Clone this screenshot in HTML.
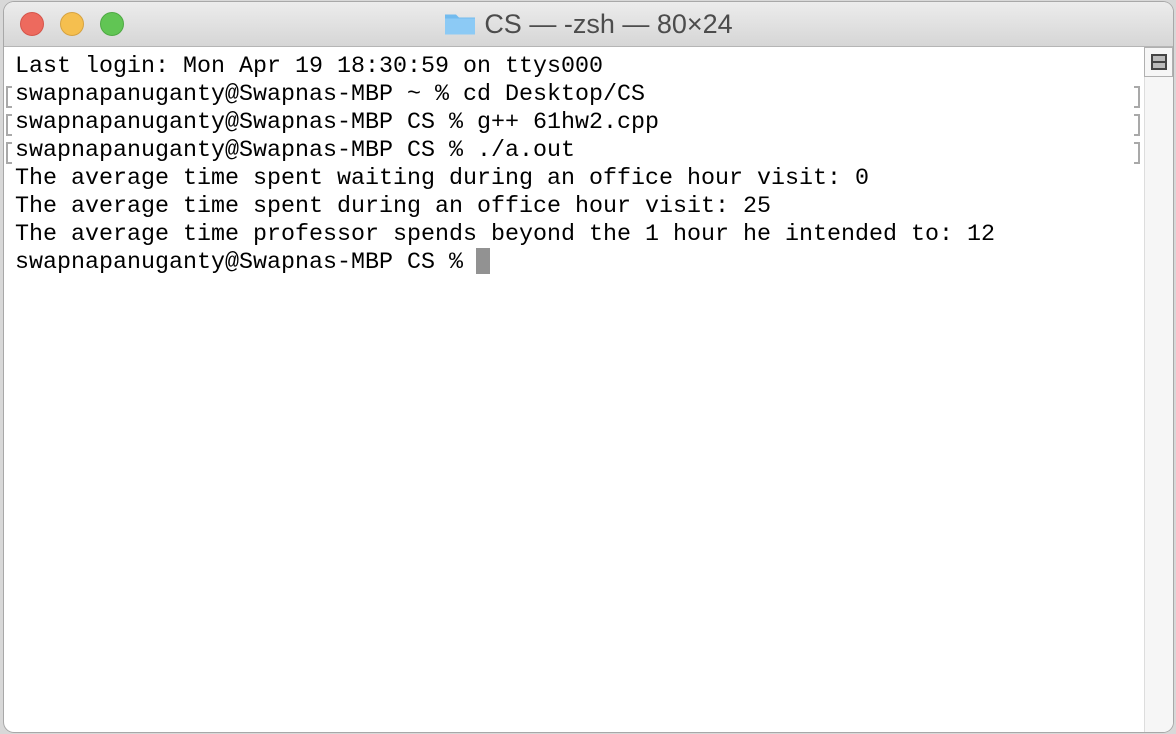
<!DOCTYPE html>
<html><head><style>
html,body{margin:0;padding:0;width:1176px;height:734px;overflow:hidden;background:#d8d8d8;}
.win{position:absolute;left:4px;top:2px;width:1169px;height:730px;background:#fff;border-radius:10px;overflow:hidden;box-shadow:0 0 0 1px #a8a8a8;}
.title{position:absolute;left:0;top:0;width:100%;height:44px;background:linear-gradient(#ececec,#d6d6d6);border-bottom:1px solid #b5b5b5;}
.dot{position:absolute;top:10px;width:24px;height:24px;border-radius:50%;}
.t{position:absolute;left:0;width:100%;top:7px;text-align:center;font-family:"Liberation Sans",sans-serif;font-size:27px;color:#4c4c4c;}
.term{position:absolute;left:11px;top:51px;font-family:"Liberation Mono",monospace;font-size:23.33px;line-height:28px;color:#000;white-space:pre;}
.sb{position:absolute;left:1140px;top:45px;width:29px;height:690px;background:#f6f6f6;border-left:1px solid #ddd;}
.sbtop{position:absolute;left:1140px;top:45px;width:27px;height:28px;border:1px solid #b0b0b0;background:#f6f6f6;}
.br{position:absolute;width:4px;height:18px;border:2px solid #a9a9a9;}
</style></head><body>
<div class="win">
<div class="title">
<div class="dot" style="left:16px;background:#ed6a5e;border:1px solid #d5544a;box-sizing:border-box"></div>
<div class="dot" style="left:56px;background:#f5bf4f;border:1px solid #d6a240;box-sizing:border-box"></div>
<div class="dot" style="left:96px;background:#61c554;border:1px solid #4ea943;box-sizing:border-box"></div>
<div class="t"><svg width="32" height="25" viewBox="0 0 32 24" style="vertical-align:-3px;margin-right:8px"><path d="M1 3h11l3 3h16v17H1z" fill="#72bbee"/><rect x="1" y="7" width="30" height="16" fill="#8ccaf5"/></svg>CS — -zsh — 80×24</div>
</div>
<div class="term">Last login: Mon Apr 19 18:30:59 on ttys000
swapnapanuganty@Swapnas-MBP ~ % cd Desktop/CS
swapnapanuganty@Swapnas-MBP CS % g++ 61hw2.cpp
swapnapanuganty@Swapnas-MBP CS % ./a.out
The average time spent waiting during an office hour visit: 0
The average time spent during an office hour visit: 25
The average time professor spends beyond the 1 hour he intended to: 12
swapnapanuganty@Swapnas-MBP CS % </div>
<div style="position:absolute;left:472px;top:246px;width:14px;height:26px;background:#929292"></div>
<div class="br" style="left:2px;top:84px;border-right:none"></div>
<div class="br" style="left:2px;top:112px;border-right:none"></div>
<div class="br" style="left:2px;top:140px;border-right:none"></div>
<div class="br" style="left:1130px;top:84px;border-left:none"></div>
<div class="br" style="left:1130px;top:112px;border-left:none"></div>
<div class="br" style="left:1130px;top:140px;border-left:none"></div>
<div class="sb"></div>
<div class="sbtop"><div style="position:absolute;left:6px;top:6px;width:12px;height:12px;border:2px solid #444;background:#bbb"><div style="position:absolute;left:0;top:5px;width:12px;height:2px;background:#444"></div></div></div>
</div>
</body></html>
